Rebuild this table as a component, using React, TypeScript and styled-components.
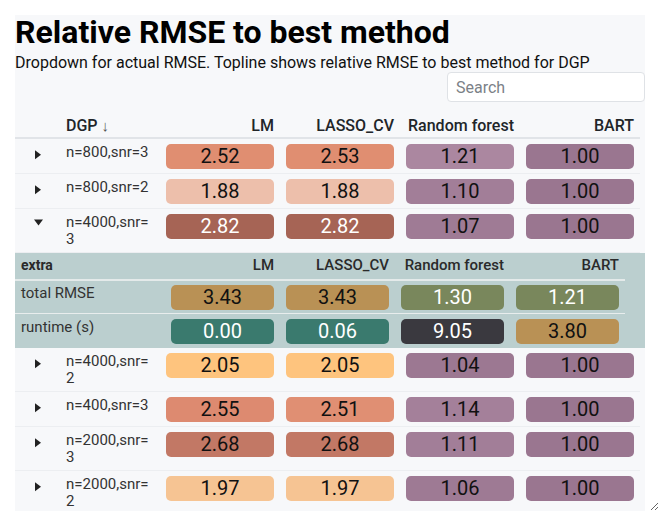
import React from 'react';
import styled, { createGlobalStyle } from 'styled-components';

const GlobalStyle = createGlobalStyle`
  html, body {
    margin: 0;
    padding: 0;
    background: #ffffff;
  }
  body {
    font-family: Roboto, "Liberation Sans", Arial, sans-serif;
    color: #212529;
  }
`;

type Cell = { v: string; bg: string; light?: boolean };
type Row = { dgp: string; cells: Cell[]; open?: boolean };

const methods = ['LM', 'LASSO_CV', 'Random forest', 'BART'];

const rows: Row[] = [
  {
    dgp: 'n=800,snr=3',
    cells: [
      { v: '2.52', bg: '#e08e71' },
      { v: '2.53', bg: '#e08e71' },
      { v: '1.21', bg: '#ab87a0' },
      { v: '1.00', bg: '#9a7690' },
    ],
  },
  {
    dgp: 'n=800,snr=2',
    cells: [
      { v: '1.88', bg: '#edbfab' },
      { v: '1.88', bg: '#edbfab' },
      { v: '1.10', bg: '#a27e98' },
      { v: '1.00', bg: '#9a7690' },
    ],
  },
  {
    dgp: 'n=4000,snr=3',
    open: true,
    cells: [
      { v: '2.82', bg: '#a66455', light: true },
      { v: '2.82', bg: '#a66455', light: true },
      { v: '1.07', bg: '#9f7b95' },
      { v: '1.00', bg: '#9a7690' },
    ],
  },
  {
    dgp: 'n=4000,snr=2',
    cells: [
      { v: '2.05', bg: '#fec47e' },
      { v: '2.05', bg: '#fec47e' },
      { v: '1.04', bg: '#9c7892' },
      { v: '1.00', bg: '#9a7690' },
    ],
  },
  {
    dgp: 'n=400,snr=3',
    cells: [
      { v: '2.55', bg: '#dd8a70' },
      { v: '2.51', bg: '#e08f73' },
      { v: '1.14', bg: '#a4809a' },
      { v: '1.00', bg: '#9a7690' },
    ],
  },
  {
    dgp: 'n=2000,snr=3',
    cells: [
      { v: '2.68', bg: '#c27865' },
      { v: '2.68', bg: '#c27865' },
      { v: '1.11', bg: '#a27e98' },
      { v: '1.00', bg: '#9a7690' },
    ],
  },
  {
    dgp: 'n=2000,snr=2',
    cells: [
      { v: '1.97', bg: '#f6c493' },
      { v: '1.97', bg: '#f6c493' },
      { v: '1.06', bg: '#9e7a94' },
      { v: '1.00', bg: '#9a7690' },
    ],
  },
];

const extraRows: { label: string; cells: Cell[] }[] = [
  {
    label: 'total RMSE',
    cells: [
      { v: '3.43', bg: '#b99155' },
      { v: '3.43', bg: '#b99155' },
      { v: '1.30', bg: '#79875c', light: true },
      { v: '1.21', bg: '#79875c', light: true },
    ],
  },
  {
    label: 'runtime (s)',
    cells: [
      { v: '0.00', bg: '#3a7a6e', light: true },
      { v: '0.06', bg: '#3a7a6e', light: true },
      { v: '9.05', bg: '#3a393f', light: true },
      { v: '3.80', bg: '#b99155' },
    ],
  },
];

const Frame = styled.div`
  width: 659px;
  height: 511px;
  box-sizing: border-box;
  padding: 15px 14px 0 15px;
  overflow: hidden;
  resize: both;
`;

const Panel = styled.div`
  width: 630px;
  background: #f7f8fa;
  min-height: 496px;
`;

const Title = styled.h1`
  margin: 0;
  font-size: 32px;
  line-height: 34px;
  font-weight: 700;
  color: #000;
`;

const Subtitle = styled.div`
  margin-top: 4px;
  font-size: 16px;
  line-height: 19px;
  color: #111;
`;

const SearchBar = styled.div`
  display: flex;
  justify-content: flex-end;
`;

const SearchInput = styled.input`
  width: 198px;
  height: 30px;
  box-sizing: border-box;
  border: 1px solid #dfe2e6;
  border-radius: 4px;
  background: #fff;
  padding: 0 8px;
  font-family: inherit;
  font-size: 16px;
  color: #212529;
  outline: none;
  &::placeholder {
    color: #7b8187;
  }
`;

const Grid = styled.div`
  width: 625px;
  display: grid;
  grid-template-columns: 45px 100px 120px 120px 120px 120px;
`;

const HeadRow = styled(Grid)`
  border-bottom: 2px solid #e1e4e8;
`;

const HeadCell = styled.div<{ $left?: boolean }>`
  padding: 14px 6px 1px;
  font-size: 16px;
  line-height: 19px;
  font-weight: 500;
  color: #212529;
  text-align: ${(p) => (p.$left ? 'left' : 'right')};
  white-space: nowrap;
`;

const SortArrow = styled.span`
  font-weight: 400;
  font-size: 15px;
  color: #555;
  margin-left: 4px;
`;

const BodyRow = styled(Grid)`
  border-bottom: 1px solid #eceef1;
`;

const Expander = styled.div`
  padding: 10px 0 0 17px;
  svg {
    display: block;
  }
`;

const DgpCell = styled.div`
  padding: 5px 6px 4px;
  font-size: 15px;
  line-height: 17px;
  color: #333;
  word-break: break-all;
`;

const ValueSlot = styled.div`
  padding: 5px 6px 4px;
`;

const Pill = styled.div<{ $bg: string; $light?: boolean }>`
  height: 25px;
  border-radius: 5px;
  background: ${(p) => p.$bg};
  color: ${(p) => (p.$light ? '#ffffff' : '#111111')};
  font-size: 20px;
  line-height: 25px;
  text-align: center;
`;

const ExtraBlock = styled.div`
  width: 630px;
  background: #bbcfcf;
`;

const ExtraGrid = styled.div`
  width: 610px;
  display: grid;
  grid-template-columns: 150px 115px 115px 115px 115px;
`;

const ExtraHead = styled(ExtraGrid)`
  border-bottom: 2px solid #e4eaea;
`;

const ExtraHeadCell = styled.div<{ $left?: boolean }>`
  padding: 4px 6px 5px;
  line-height: 17px;
  font-weight: ${(p) => (p.$left ? 700 : 500)};
  font-size: ${(p) => (p.$left ? '14px' : '15px')};
  color: #2a2a2a;
  text-align: ${(p) => (p.$left ? 'left' : 'right')};
  white-space: nowrap;
`;

const ExtraRow = styled(ExtraGrid)<{ $last?: boolean }>`
  border-bottom: ${(p) => (p.$last ? 'none' : '1px solid #e8eded')};
`;

const ExtraLabel = styled.div<{ $last?: boolean }>`
  padding: ${(p) => (p.$last ? '5px 6px 4px' : '4px 6px 3px')};
  font-size: 15px;
  line-height: 17px;
  color: #333;
`;

const ExtraSlot = styled.div<{ $last?: boolean }>`
  padding: ${(p) => (p.$last ? '5px 6px 4px' : '4px 6px 3px')};
`;

function Caret({ open }: { open?: boolean }) {
  return (
    <svg width="12" height="12" viewBox="0 0 12 12">
      {open ? (
        <polygon points="2,0.5 11,0.5 6.5,6.5" fill="#222" />
      ) : (
        <polygon points="3,1.3 9,5.8 3,10.3" fill="#222" />
      )}
    </svg>
  );
}

function ExtraSection() {
  return (
    <ExtraBlock>
      <ExtraHead>
        <ExtraHeadCell $left>extra</ExtraHeadCell>
        {methods.map((m) => (
          <ExtraHeadCell key={m}>{m}</ExtraHeadCell>
        ))}
      </ExtraHead>
      {extraRows.map((r, i) => {
        const last = i === extraRows.length - 1;
        return (
          <ExtraRow key={r.label} $last={last}>
            <ExtraLabel $last={last}>{r.label}</ExtraLabel>
            {r.cells.map((c, j) => (
              <ExtraSlot key={j} $last={last}>
                <Pill $bg={c.bg} $light={c.light}>{c.v}</Pill>
              </ExtraSlot>
            ))}
          </ExtraRow>
        );
      })}
    </ExtraBlock>
  );
}

export default function App() {
  return (
    <>
      <GlobalStyle />
      <Frame>
        <Panel>
          <Title>Relative RMSE to best method</Title>
          <Subtitle>Dropdown for actual RMSE. Topline shows relative RMSE to best method for DGP</Subtitle>
          <SearchBar>
            <SearchInput placeholder="Search" />
          </SearchBar>
          <HeadRow>
            <HeadCell $left />
            <HeadCell $left>
              DGP
              <SortArrow>↓</SortArrow>
            </HeadCell>
            {methods.map((m) => (
              <HeadCell key={m}>{m}</HeadCell>
            ))}
          </HeadRow>
          {rows.map((r) => (
            <React.Fragment key={r.dgp}>
              <BodyRow>
                <Expander>
                  <Caret open={r.open} />
                </Expander>
                <DgpCell>{r.dgp}</DgpCell>
                {r.cells.map((c, j) => (
                  <ValueSlot key={j}>
                    <Pill $bg={c.bg} $light={c.light}>{c.v}</Pill>
                  </ValueSlot>
                ))}
              </BodyRow>
              {r.open && <ExtraSection />}
            </React.Fragment>
          ))}
        </Panel>
      </Frame>
    </>
  );
}
